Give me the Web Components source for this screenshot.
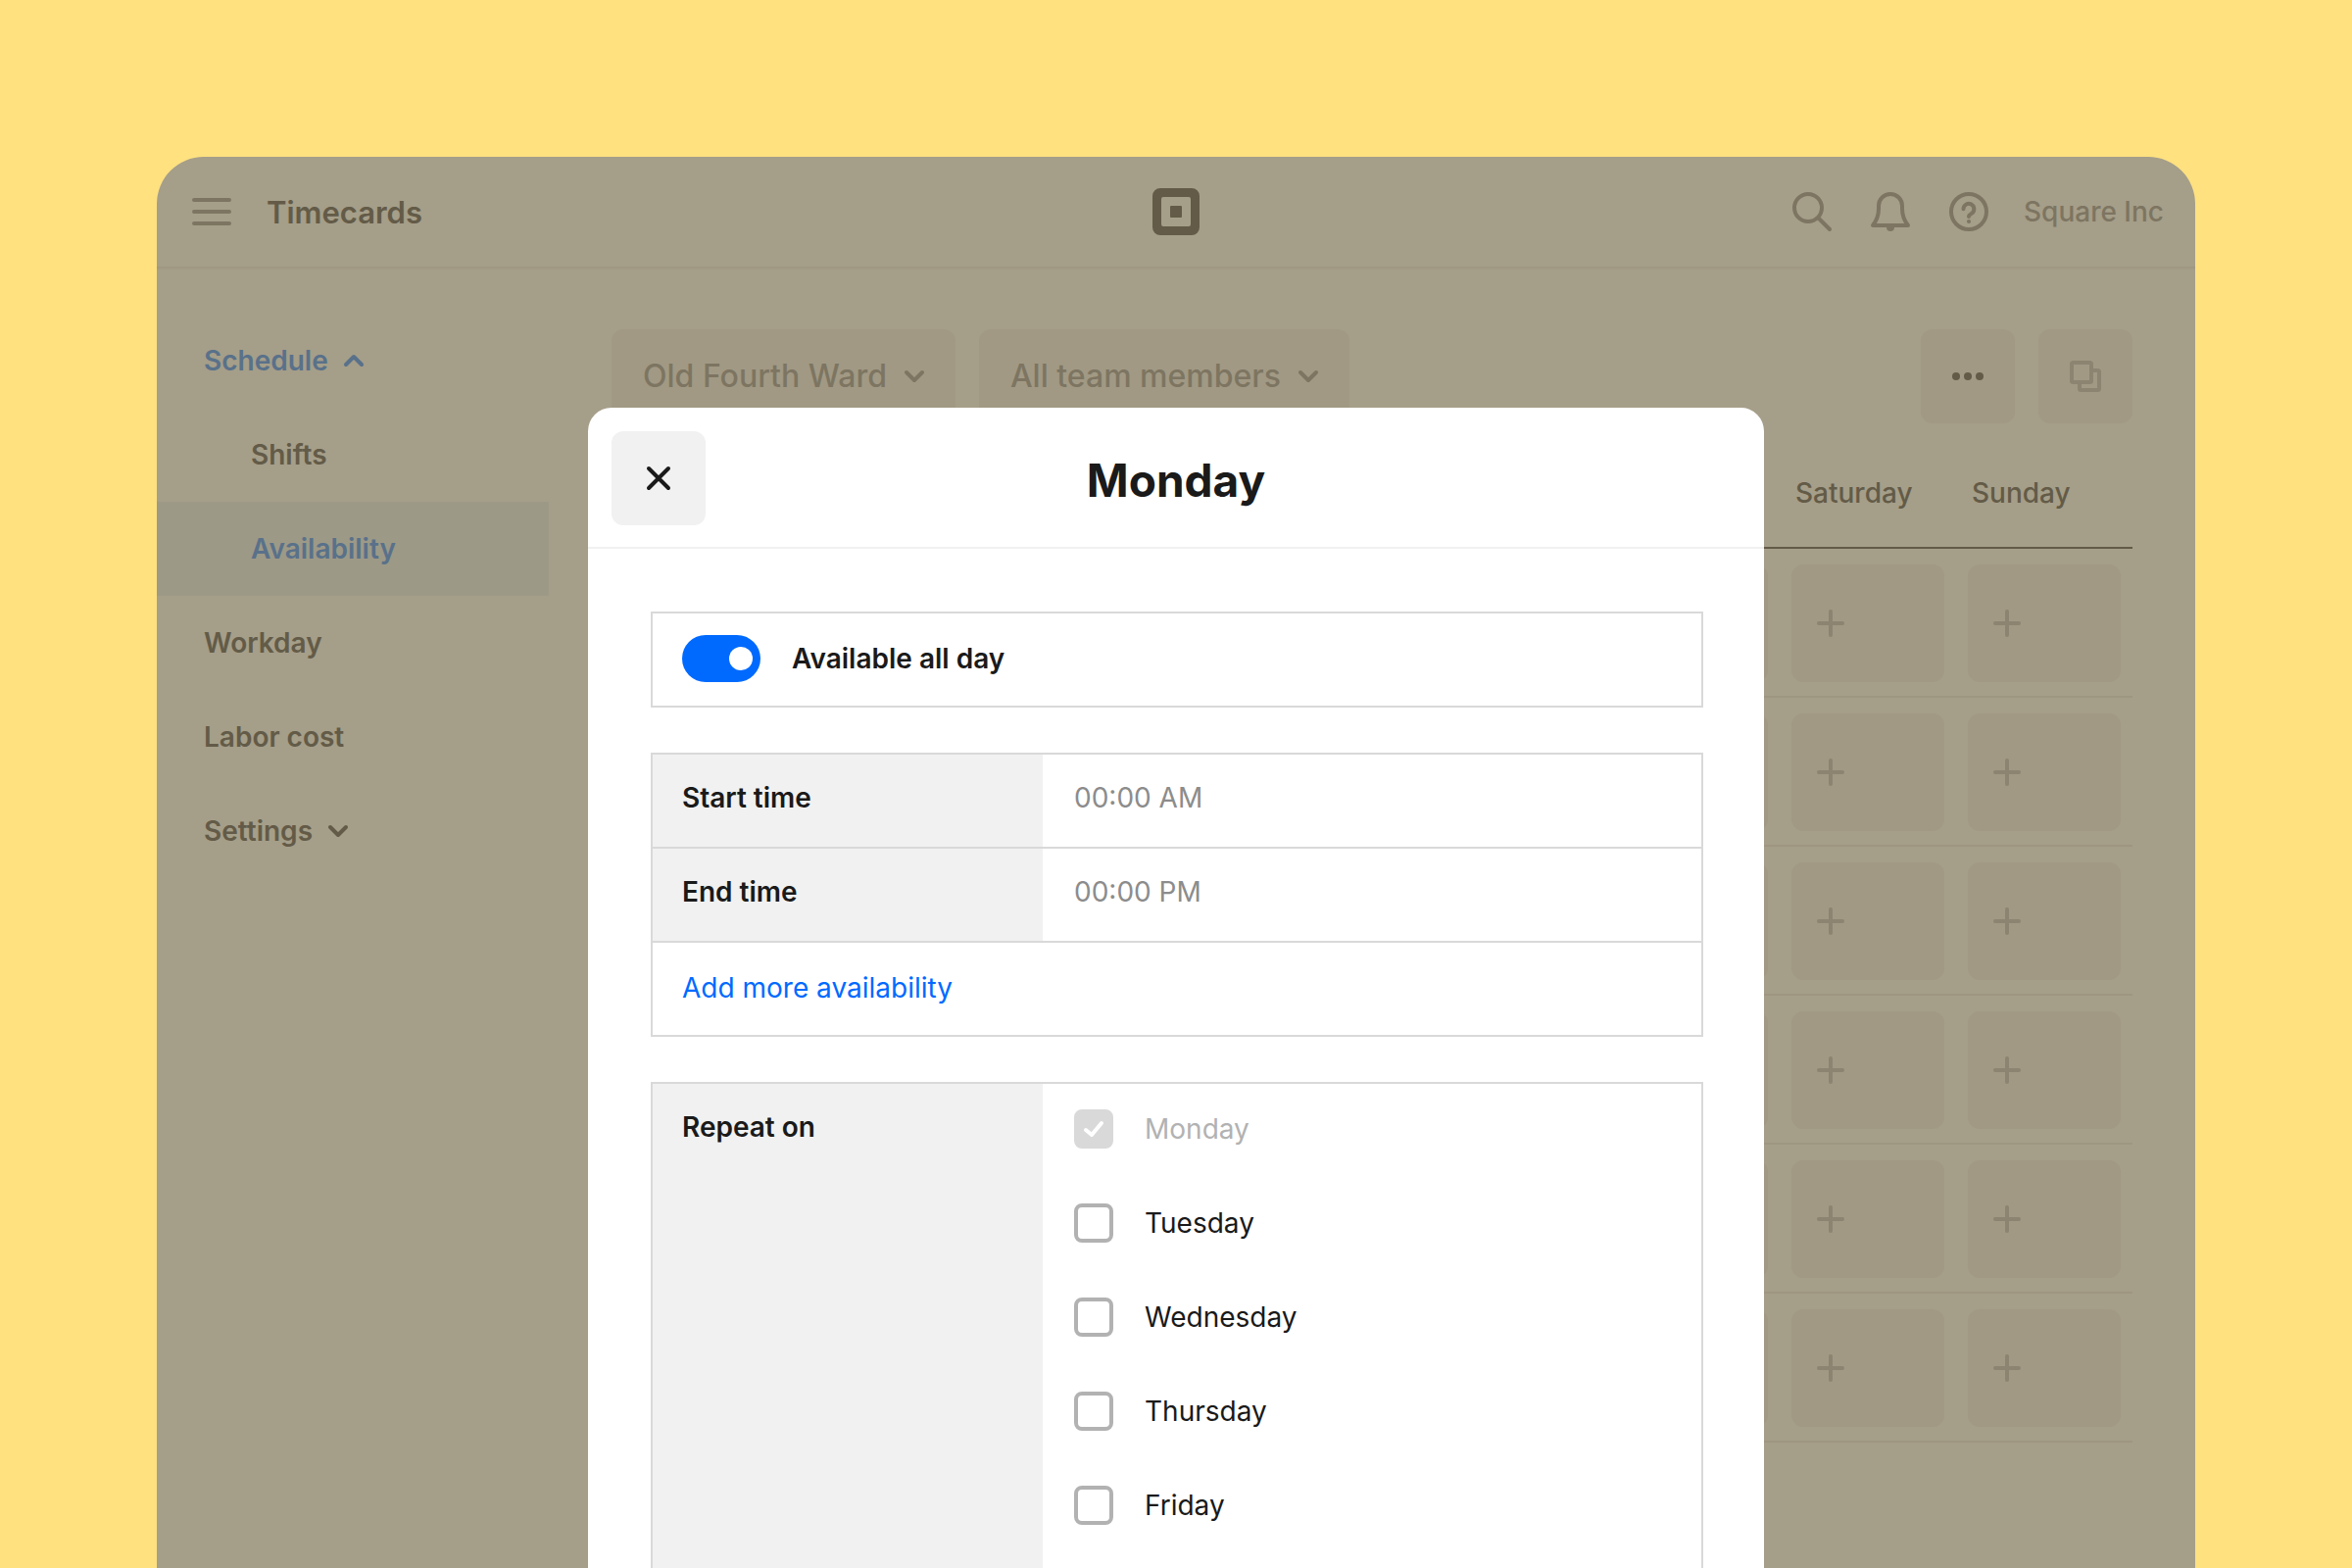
<!DOCTYPE html>
<html lang="en">
<head>
<meta charset="utf-8">
<title>Timecards</title>
<style>
  :root {
    --surface: #a59e89;
    --button: #a19984;
    --rule: #9e9681;
    --ink: #635b47;
    --ink-2: #7d7561;
    --ink-3: #8c8470;
    --link: #59718a;
    --selected: #9d9987;
    --text: #1a1a1a;
    --line: #d9d9d9;
    --fill: #f1f1f1;
    --blue: #006aff;
  }
  html, body { height: 100%; }
  body {
    margin: 0;
    background: #ffe180;
    font-family: Inter, "Liberation Sans", sans-serif;
    font-size: 28px;
    line-height: 40px;
    color: var(--text);
  }
</style>
</head>
<body>
<timecards-app></timecards-app>
<script>
  const base = `<style>
    *, *::before, *::after { box-sizing: border-box; }
    button, input { font: inherit; color: inherit; margin: 0; }
    button { border: 0; padding: 0; cursor: pointer; }
    a { color: inherit; text-decoration: none; }
  </style>`;

  function define(name, render) {
    customElements.define(name, class extends HTMLElement {
      constructor() {
        super();
        this.attachShadow({ mode: 'open' });
      }
      connectedCallback() {
        this.shadowRoot.innerHTML = base + render(this);
      }
    });
  }

  /* Icons: [width, height, markup] */
  const icons = {
    menu: [40, 28, '<path d="M2 2h36M2 14h36M2 26h36"/>'],
    search: [40, 40, '<circle cx="16" cy="16" r="14"/><path d="M27 27l11 11"/>'],
    bell: [40, 40, '<path d="M8 14v3c0 7-2 12-6 17h36c-4-5-6-10-6-17v-3a12 12 0 0 0-24 0z"/><path d="M16 36a4 4 0 0 0 8 0z" fill="currentColor" stroke="none"/>'],
    help: [40, 40, '<circle cx="20" cy="20" r="18"/><path d="M14.5 17.3a5.4 5.4 0 1 1 8.2 4.6C20.900 23 20 23.600 20 25"/><circle cx="20" cy="30" r="2.100" fill="currentColor" stroke="none"/>'],
    logo: [48, 48, '<path fill="currentColor" stroke="none" fill-rule="evenodd" d="M8 0h32a8 8 0 0 1 8 8v32a8 8 0 0 1-8 8H8a8 8 0 0 1-8-8V8a8 8 0 0 1 8-8zM11 9a2 2 0 0 0-2 2v26a2 2 0 0 0 2 2h26a2 2 0 0 0 2-2V11a2 2 0 0 0-2-2z"/><rect x="18" y="18" width="12" height="12" rx="1" fill="currentColor" stroke="none"/>'],
    up: [20, 12, '<path d="M2 10l8-8 8 8"/>'],
    down: [20, 12, '<path d="M2 2l8 8 8-8"/>'],
    more: [32, 8, '<g fill="currentColor" stroke="none"><circle cx="4" cy="4" r="4"/><circle cx="16" cy="4" r="4"/><circle cx="28" cy="4" r="4"/></g>'],
    copy: [32, 32, '<rect x="2" y="2" width="20" height="20" rx="1.500"/><path d="M24 10h4.500a1.500 1.500 0 0 1 1.500 1.500v17a1.500 1.500 0 0 1-1.500 1.500h-17a1.500 1.500 0 0 1-1.500-1.500V24" stroke-linecap="butt"/>'],
    plus: [28, 28, '<path d="M14 2v24M2 14h24"/>'],
    close: [24, 24, '<path d="M2 2l20 20M22 2L2 22"/>'],
    check: [20, 16, '<path d="M2 9l6 5L18 2"/>']
  };

  define('ui-icon', el => {
    const [w, h, body] = icons[el.getAttribute('name')];
    return `<style>
      :host { display: block; flex: none; }
      svg { display: block; overflow: visible; }
    </style>
    <svg width="${w}" height="${h}" viewBox="0 0 ${w} ${h}" fill="none" stroke="currentColor"
      stroke-width="4" stroke-linecap="round" stroke-linejoin="round" aria-hidden="true">${body}</svg>`;
  });

  define('app-header', () => `<style>
      :host { display: block; }
      header {
        display: grid; grid-template-columns: 1fr auto 1fr; align-items: center;
        height: 112px; padding: 0 32px;
      }
      .shade { height: 4px; background: linear-gradient(var(--rule), var(--surface)); }
      .left, .right, .tools { display: flex; align-items: center; color: var(--ink-2); }
      .left { gap: 36px; padding-left: 4px; }
      .right { justify-content: flex-end; gap: 36px; }
      .tools { gap: 40px; }
      h1 { margin: 0; padding-top: 2px; font-size: 31px; font-weight: 600; color: var(--ink); }
      button { background: none; }
      a { font-weight: 500; }
      .logo { color: var(--ink); }
    </style>
    <header>
      <div class="left">
        <button aria-label="Menu"><ui-icon name="menu"></ui-icon></button>
        <h1>Timecards</h1>
      </div>
      <ui-icon class="logo" name="logo"></ui-icon>
      <div class="right">
        <div class="tools">
          <button aria-label="Search"><ui-icon name="search"></ui-icon></button>
          <button aria-label="Notifications"><ui-icon name="bell"></ui-icon></button>
          <button aria-label="Help"><ui-icon name="help"></ui-icon></button>
        </div>
        <a href="#account">Square Inc</a>
      </div>
    </header>
    <div class="shade"></div>`);

  define('nav-item', el => `<style>
      :host { display: block; color: var(--ink); font-weight: 600; }
      :host([active]) { color: var(--link); }
      :host([selected]) { background: var(--selected); }
      a { display: flex; align-items: center; gap: 16px; height: 96px; padding-left: 48px; }
      :host([nested]) a { padding-left: 96px; }
    </style>
    <a href="#"><slot></slot>${el.hasAttribute('icon') ? `<ui-icon name="${el.getAttribute('icon')}"></ui-icon>` : ''}</a>`);

  define('side-nav', () => `<style>
      :host { display: block; flex: none; width: 400px; padding-top: 44px; }
    </style>
    <nav>
      <nav-item active icon="up">Schedule</nav-item>
      <nav-item nested>Shifts</nav-item>
      <nav-item nested active selected>Availability</nav-item>
      <nav-item>Workday</nav-item>
      <nav-item>Labor cost</nav-item>
      <nav-item icon="down">Settings</nav-item>
    </nav>`);

  define('tool-button', el => `<style>
      :host { display: block; color: var(--ink-2); }
      :host([tone="strong"]) { color: var(--ink); }
      :host([tone="soft"]) { color: var(--ink-3); }
      button {
        display: flex; align-items: center; justify-content: center; gap: 18px;
        min-width: 96px; height: 96px; padding: 0 32px; border-radius: 12px;
        background: var(--button); font-size: 32px; font-weight: 500;
      }
    </style>
    <button ${el.hasAttribute('label') ? `aria-label="${el.getAttribute('label')}"` : ''}>${el.hasAttribute('label') ? '' : '<slot></slot>'}<ui-icon name="${el.getAttribute('icon')}"></ui-icon></button>`);

  define('schedule-toolbar', () => `<style>
      :host { display: flex; justify-content: space-between; }
      div { display: flex; gap: 24px; }
    </style>
    <div>
      <tool-button icon="down">Old Fourth Ward</tool-button>
      <tool-button icon="down">All team members</tool-button>
    </div>
    <div>
      <tool-button icon="more" tone="strong" label="More"></tool-button>
      <tool-button icon="copy" tone="soft" label="Copy"></tool-button>
    </div>`);

  define('availability-table', () => {
    const days = ['', '', '', '', '', 'Saturday', 'Sunday'];
    const cells = days.map(() => '<td><button aria-label="Add"><ui-icon name="plus"></ui-icon></button></td>').join('');
    return `<style>
      :host { display: block; }
      table { width: 100%; table-layout: fixed; border-collapse: separate; border-spacing: 0; }
      th { height: 112px; padding: 0 16px; text-align: left; font-weight: 500; color: var(--ink);
           border-bottom: 2px solid var(--ink); }
      .day { width: 180px; }
      td { height: 152px; padding: 16px 12px 14px; border-bottom: 2px solid var(--rule); }
      button { display: flex; align-items: center; width: 100%; height: 120px; padding-left: 26px;
               border-radius: 12px; background: var(--button); color: var(--ink-3); }
    </style>
    <table>
      <thead><tr><th></th>${days.map(d => `<th class="day">${d}</th>`).join('')}</tr></thead>
      <tbody>${`<tr><td></td>${cells}</tr>`.repeat(6)}</tbody>
    </table>`;
  });

  define('toggle-row', el => `<style>
      :host { display: block; border: 2px solid var(--line); }
      label { display: flex; align-items: center; gap: 32px; height: 94px; padding: 0 30px 2px; font-weight: 600; }
      input { appearance: none; display: flex; align-items: center; width: 80px; height: 48px;
              padding: 0 8px; border-radius: 24px; background: #b2b2b2; }
      input::before { content: ""; width: 24px; height: 24px; border-radius: 50%; background: #fff; }
      input:checked { background: var(--blue); justify-content: flex-end; }
    </style>
    <label for="toggle"><input id="toggle" type="checkbox" role="switch" checked>${el.getAttribute('label')}</label>`);

  define('time-row', el => `<style>
      :host { display: flex; height: 96px; border-bottom: 2px solid var(--line); }
      label { width: 398px; padding: 24px 30px; background: var(--fill); font-weight: 600; }
      input { flex: 1; min-width: 0; height: 88px; padding: 0 32px; border: 0; outline: 0; background: none; }
      input::placeholder { color: #8c8c8c; opacity: 1; }
    </style>
    <label for="time">${el.getAttribute('label')}</label>
    <input id="time" type="text" placeholder="${el.getAttribute('placeholder')}">`);

  define('time-group', () => `<style>
      :host { display: block; border: 2px solid var(--line); }
      a { display: flex; align-items: center; height: 94px; padding: 0 30px 2px; color: var(--blue); }
    </style>
    <time-row label="Start time" placeholder="00:00 AM"></time-row>
    <time-row label="End time" placeholder="00:00 PM"></time-row>
    <a href="#add">Add more availability</a>`);

  define('day-check', el => {
    const off = el.hasAttribute('locked');
    return `<style>
      :host { display: block; }
      :host([locked]) { color: #b2b2b2; }
      label { display: flex; align-items: center; gap: 32px; }
      .box { display: grid; place-items: center; }
      .box > * { grid-area: 1 / 1; }
      input { appearance: none; width: 40px; height: 40px; border: 4px solid #b2b2b2; border-radius: 8px; background: #fff; }
      input:disabled { border-color: var(--line); background: var(--line); }
      ui-icon { color: #fff; z-index: 1; pointer-events: none; }
    </style>
    <label for="day"><span class="box"><input id="day" type="checkbox" ${off ? 'checked disabled' : ''}>${off ? '<ui-icon name="check"></ui-icon>' : ''}</span><slot></slot></label>`;
  });

  define('repeat-group', () => `<style>
      :host { display: flex; border: 2px solid var(--line); border-bottom: 0; }
      .name { width: 398px; padding: 24px 30px; background: var(--fill); font-weight: 600; }
      .days { display: flex; flex-direction: column; gap: 56px; padding: 26px 32px; }
    </style>
    <div class="name" id="name">Repeat on</div>
    <div class="days" role="group" aria-labelledby="name">
      <day-check locked>Monday</day-check>
      <day-check>Tuesday</day-check>
      <day-check>Wednesday</day-check>
      <day-check>Thursday</day-check>
      <day-check>Friday</day-check>
    </div>`);

  define('day-modal', () => `<style>
      :host { display: flex; flex-direction: column; background: #fff; border-radius: 24px 24px 0 0; overflow: hidden; }
      header { display: grid; grid-template-columns: 96px 1fr 96px; align-items: center;
               height: 144px; padding: 24px 24px 22px; border-bottom: 2px solid var(--fill); }
      button { display: grid; place-items: center; width: 96px; height: 96px; border-radius: 12px; background: var(--fill); color: var(--text); }
      h2 { margin: 0; padding-top: 4px; font-size: 46px; line-height: 56px; font-weight: 700; text-align: center; }
      form { flex: 1; display: flex; flex-direction: column; gap: 46px; padding: 64px 62px 0 64px; }
      repeat-group { flex: 1; }
    </style>
    <header>
      <button aria-label="Close"><ui-icon name="close"></ui-icon></button>
      <h2>Monday</h2>
    </header>
    <form>
      <toggle-row label="Available all day"></toggle-row>
      <time-group></time-group>
      <repeat-group></repeat-group>
    </form>`);

  define('timecards-app', () => `<style>
      :host { display: flex; height: 100vh; padding: 160px 160px 0; box-sizing: border-box; overflow: hidden; }
      .window { position: relative; flex: 1; min-width: 0; display: flex; flex-direction: column;
                background: var(--surface); border-radius: 48px 48px 0 0; overflow: hidden; }
      .body { flex: 1; display: flex; gap: 64px; }
      main { flex: 1; min-width: 0; padding: 60px 64px 0 0; display: flex; flex-direction: column; gap: 16px; }
      day-modal { position: absolute; top: 256px; bottom: 0; left: 0; right: 0; margin: 0 auto;
                  width: 1200px; max-width: 100%; }
    </style>
    <div class="window">
      <app-header></app-header>
      <div class="body">
        <side-nav></side-nav>
        <main>
          <schedule-toolbar></schedule-toolbar>
          <availability-table></availability-table>
        </main>
      </div>
      <day-modal role="dialog" aria-modal="true"></day-modal>
    </div>`);
</script>
</body>
</html>
